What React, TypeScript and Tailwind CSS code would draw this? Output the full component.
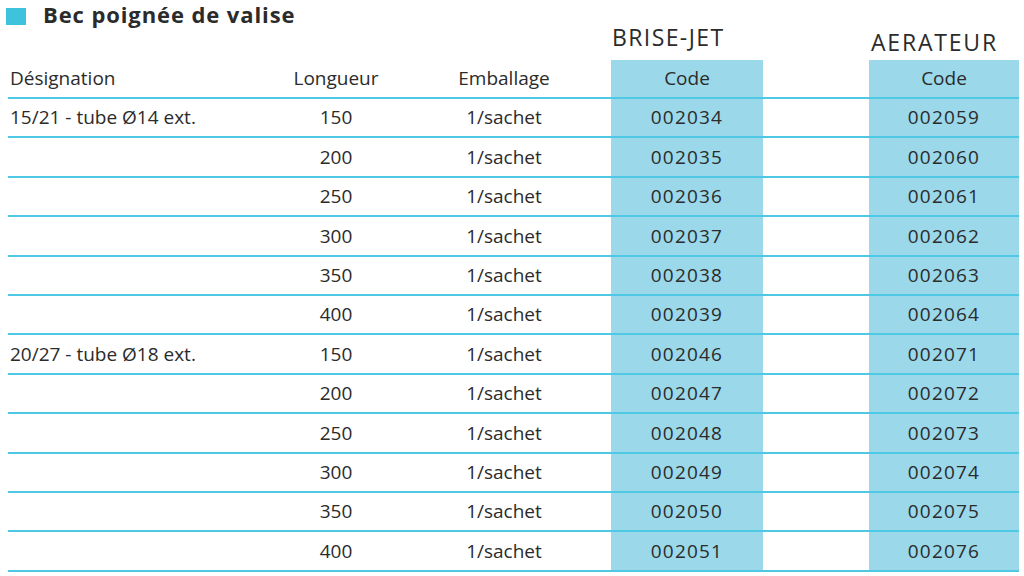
import React from 'react';

const rows = [
  { designation: '15/21 - tube Ø14 ext.', longueur: '150', brise: '002034', aerateur: '002059' },
  { designation: '', longueur: '200', brise: '002035', aerateur: '002060' },
  { designation: '', longueur: '250', brise: '002036', aerateur: '002061' },
  { designation: '', longueur: '300', brise: '002037', aerateur: '002062' },
  { designation: '', longueur: '350', brise: '002038', aerateur: '002063' },
  { designation: '', longueur: '400', brise: '002039', aerateur: '002064' },
  { designation: '20/27 - tube Ø18 ext.', longueur: '150', brise: '002046', aerateur: '002071' },
  { designation: '', longueur: '200', brise: '002047', aerateur: '002072' },
  { designation: '', longueur: '250', brise: '002048', aerateur: '002073' },
  { designation: '', longueur: '300', brise: '002049', aerateur: '002074' },
  { designation: '', longueur: '350', brise: '002050', aerateur: '002075' },
  { designation: '', longueur: '400', brise: '002051', aerateur: '002076' },
];

const cols = 'grid grid-cols-[262px_132px_204px_5px_152px_106px_150px]';

export default function App() {
  return (
    <div className="w-[1024px] h-[576px] bg-white overflow-hidden text-[#2b2b2b]" style={{ fontFamily: '"Open Sans", sans-serif' }}>
      {/* Title */}
      <div className="flex items-start h-[26px] pl-[6px]">
        <span className="block w-[20px] h-[17px] bg-[#3ec3dc] mt-[8px]" />
        <h1 className="ml-[17px] mt-[2px] text-[22px] font-bold leading-[24px] tracking-[0.9px]">Bec poignée de valise</h1>
      </div>

      {/* Product groups */}
      <div className={`${cols} ml-2 h-[34px] items-start`}>
        <div className="col-start-5 pl-[1px] text-[23px] leading-none tracking-[1.4px]">BRISE-JET</div>
        <div className="col-start-7 pl-[2px] mt-[5px] text-[23px] leading-none tracking-[1.8px]">AERATEUR</div>
      </div>

      {/* Table */}
      <div className="ml-2 w-[1011px]">
        <div className={`${cols} h-[39px] border-b-2 border-[#4fc8e6] text-[19px] items-center`}>
          <div className="pl-[2px]">Désignation</div>
          <div className="text-center">Longueur</div>
          <div className="text-center">Emballage</div>
          <div />
          <div className="bg-[#9ad8ea] h-full flex items-center justify-center">Code</div>
          <div />
          <div className="bg-[#9ad8ea] h-full flex items-center justify-center">Code</div>
        </div>
        {rows.map((r, i) => (
          <div key={i} className={`${cols} h-[39.4px] border-b-2 border-[#4fc8e6] text-[19px]`}>
            <div className="pl-[2px] flex items-center">{r.designation}</div>
            <div className="flex items-center justify-center">{r.longueur}</div>
            <div className="flex items-center justify-center">1/sachet</div>
            <div />
            <div className="flex items-center justify-center bg-[#9ad8ea] tracking-[1.2px]">{r.brise}</div>
            <div />
            <div className="flex items-center justify-center bg-[#9ad8ea] tracking-[1.2px]">{r.aerateur}</div>
          </div>
        ))}
      </div>
    </div>
  );
}
